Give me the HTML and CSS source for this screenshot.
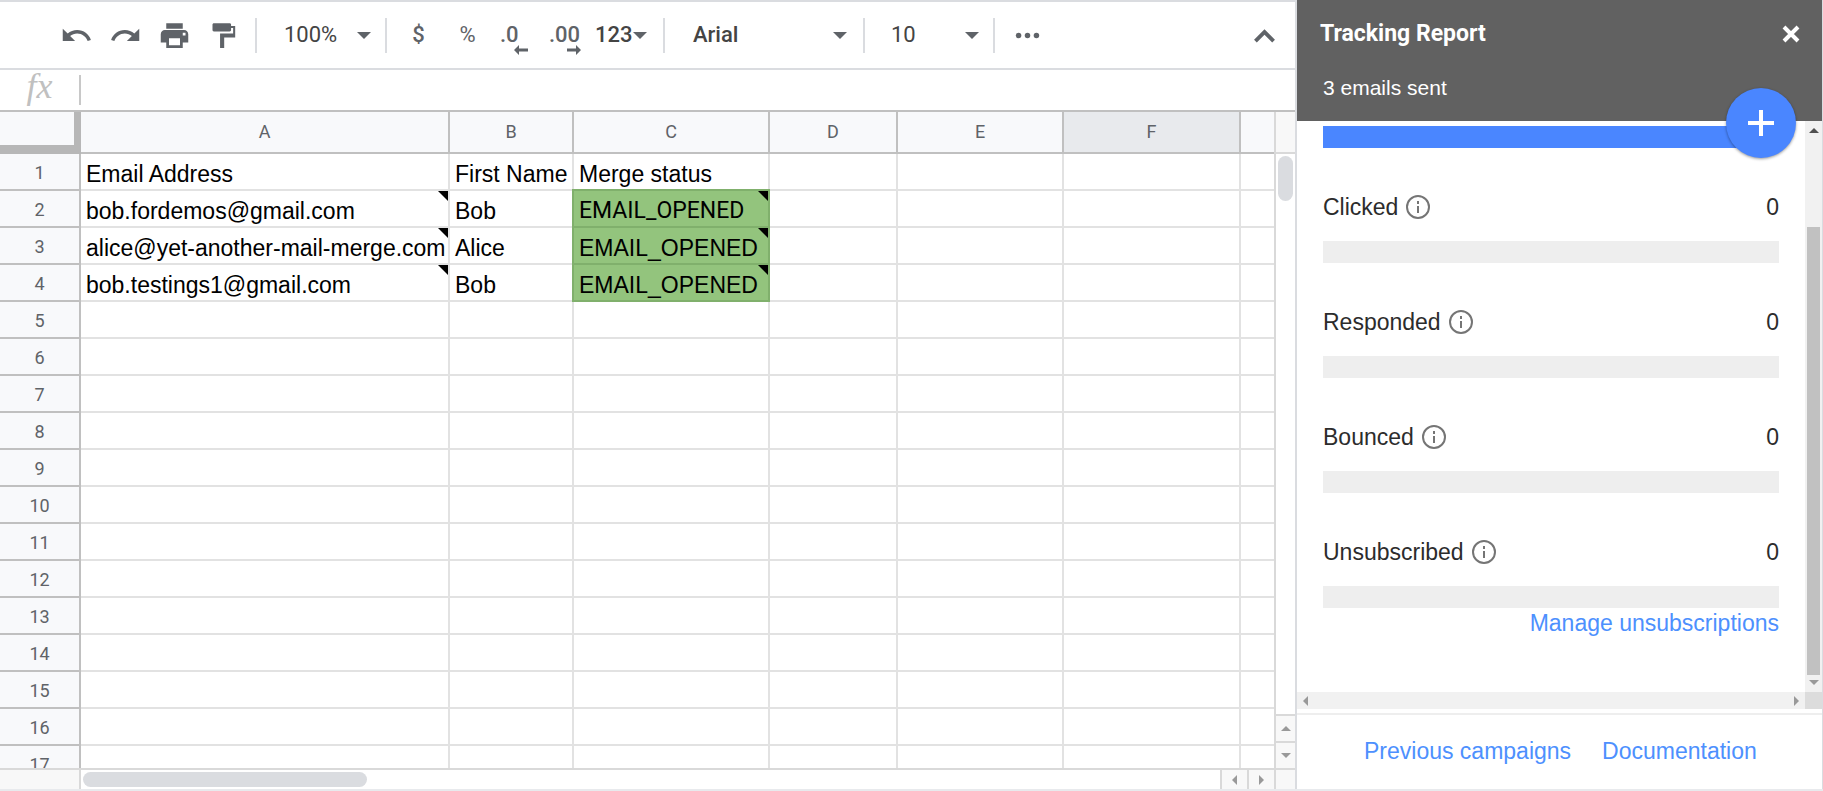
FILE: index.html
```
<!DOCTYPE html>
<html lang="en">
<head>
    <meta charset="UTF-8">
    <meta name="viewport" content="width=device-width, initial-scale=1.0">
    <title>Tracking Report</title>
    <link rel="stylesheet" href="styles.css">
</head>
<body>
    <!-- Spreadsheet -->
    <main class="sheet">
        <div class="toolbar">
            <button class="tool" aria-label="Undo">
                <svg class="icon" viewBox="0 0 24 24"><path d="M12.5 8c-2.65 0-5.05.99-6.9 2.6L2 7v9h9l-3.62-3.62c1.39-1.16 3.16-1.88 5.12-1.88 3.54 0 6.55 2.31 7.6 5.5l2.37-.78C21.08 11.03 17.15 8 12.5 8z"/></svg>
            </button>
            <button class="tool" aria-label="Redo">
                <svg class="icon" viewBox="0 0 24 24"><path d="M18.4 10.6C16.55 8.99 14.15 8 11.5 8c-4.65 0-8.58 3.03-9.96 7.22L3.9 16c1.05-3.19 4.05-5.5 7.6-5.5 1.95 0 3.73.72 5.12 1.88L13 16h9V7l-3.6 3.6z"/></svg>
            </button>
            <button class="tool" aria-label="Print">
                <svg class="icon" viewBox="0 0 24 24"><path d="M19 8H5c-1.66 0-3 1.34-3 3v6h4v4h12v-4h4v-6c0-1.66-1.34-3-3-3zm-3 11H8v-5h8v5zm4-7h-2v-2h2v2zm-2-9H6v4h12V3z"/></svg>
            </button>
            <button class="tool" aria-label="Paint format">
                <svg class="icon" viewBox="0 0 24 24"><path d="M17.500 5V4c0-.55-.45-1-1-1H5c-.55 0-1 .45-1 1v4c0 .55.45 1 1 1h11.500c.55 0 1-.45 1-1V6.500h1.500v4H9.500V21h3v-7.500H20.500V5z"/></svg>
            </button>
            <span class="divider first"></span>
            <button class="picker zoom-level">100%<span class="arrow"></span></button>
            <span class="divider"></span>
            <button class="tool currency" aria-label="Format as currency">$</button>
            <button class="tool percent" aria-label="Format as percent">%</button>
            <button class="tool decimal less" aria-label="Decrease decimal places">.0
                <svg class="decimal-arrow" viewBox="0 0 14 10"><path d="M0 5l5-5v3.500h9v3h-9v3.500z"/></svg>
            </button>
            <button class="tool decimal" aria-label="Increase decimal places">.00
                <svg class="decimal-arrow" viewBox="0 0 14 10"><path d="M14 5l-5-5v3.500h-9v3h9v3.500z"/></svg>
            </button>
            <button class="picker number-format">123<span class="arrow"></span></button>
            <span class="divider"></span>
            <button class="picker font-name">Arial<span class="arrow"></span></button>
            <span class="divider"></span>
            <button class="picker font-size">10<span class="arrow"></span></button>
            <span class="divider"></span>
            <button class="tool more" aria-label="More">
                <svg class="icon" viewBox="0 0 24 24"><circle cx="5.500" cy="12" r="2"/><circle cx="12" cy="12" r="2"/><circle cx="18.500" cy="12" r="2"/></svg>
            </button>
            <button class="tool collapse" aria-label="Hide the menus">
                <svg class="icon" viewBox="0 0 24 24"><path d="M12 7.500l-7.600 7.600L6.400 17l5.600-5.600 5.600 5.600 2-1.900z"/></svg>
            </button>
        </div>

        <div class="formula-bar">
            <label class="fx" for="formula">fx</label>
            <input class="formula" id="formula" type="text">
        </div>

        <div class="grid-area">
            <div class="grid">
                <table>
                    <colgroup>
                        <col class="col-num"><col class="col-a"><col class="col-b"><col class="col-c">
                        <col class="col-d"><col class="col-e"><col class="col-f"><col>
                    </colgroup>
                    <thead>
                        <tr><th class="corner"></th><th>A</th><th>B</th><th>C</th><th>D</th><th>E</th><th class="selected">F</th><th></th></tr>
                    </thead>
                    <tbody>
                        <tr><th>1</th><td>Email Address</td><td>First Name</td><td>Merge status</td><td></td><td></td><td></td><td></td></tr>
                        <tr><th>2</th><td class="note">bob.fordemos@gmail.com</td><td>Bob</td><td class="note opened retyped">EMAIL_OPENED</td><td></td><td></td><td></td><td></td></tr>
                        <tr><th>3</th><td class="note">alice@yet-another-mail-merge.com</td><td>Alice</td><td class="note opened">EMAIL_OPENED</td><td></td><td></td><td></td><td></td></tr>
                        <tr><th>4</th><td class="note">bob.testings1@gmail.com</td><td>Bob</td><td class="note opened">EMAIL_OPENED</td><td></td><td></td><td></td><td></td></tr>
                        <tr><th>5</th><td></td><td></td><td></td><td></td><td></td><td></td><td></td></tr>
                        <tr><th>6</th><td></td><td></td><td></td><td></td><td></td><td></td><td></td></tr>
                        <tr><th>7</th><td></td><td></td><td></td><td></td><td></td><td></td><td></td></tr>
                        <tr><th>8</th><td></td><td></td><td></td><td></td><td></td><td></td><td></td></tr>
                        <tr><th>9</th><td></td><td></td><td></td><td></td><td></td><td></td><td></td></tr>
                        <tr><th>10</th><td></td><td></td><td></td><td></td><td></td><td></td><td></td></tr>
                        <tr><th>11</th><td></td><td></td><td></td><td></td><td></td><td></td><td></td></tr>
                        <tr><th>12</th><td></td><td></td><td></td><td></td><td></td><td></td><td></td></tr>
                        <tr><th>13</th><td></td><td></td><td></td><td></td><td></td><td></td><td></td></tr>
                        <tr><th>14</th><td></td><td></td><td></td><td></td><td></td><td></td><td></td></tr>
                        <tr><th>15</th><td></td><td></td><td></td><td></td><td></td><td></td><td></td></tr>
                        <tr><th>16</th><td></td><td></td><td></td><td></td><td></td><td></td><td></td></tr>
                        <tr><th>17</th><td></td><td></td><td></td><td></td><td></td><td></td><td></td></tr>
                    </tbody>
                </table>
            </div>
            <div class="scroll-y">
                <span class="scroll-top"></span>
                <div class="track"><span class="thumb"></span></div>
                <button class="step" aria-label="Scroll up"><span class="tri up"></span></button>
                <button class="step" aria-label="Scroll down"><span class="tri down"></span></button>
            </div>
        </div>
        <div class="scroll-x">
            <span class="scroll-start"></span>
            <div class="track"><span class="thumb"></span></div>
            <button class="step" aria-label="Scroll left"><span class="tri left"></span></button>
            <button class="step" aria-label="Scroll right"><span class="tri right"></span></button>
            <span class="scroll-end"></span>
        </div>
    </main>

    <!-- Tracking report -->
    <aside class="sidebar">
        <header class="report-header">
            <div class="title-row">
                <h1>Tracking Report</h1>
                <button class="close" aria-label="Close">
                    <svg viewBox="0 0 18 18"><path d="M2 2l14 14M16 2L2 16"/></svg>
                </button>
            </div>
            <p class="sent">3 emails sent</p>
            <button class="add" aria-label="New campaign">
                <svg viewBox="0 0 26 26"><path d="M13 0v26M0 13h26"/></svg>
            </button>
        </header>

        <div class="report-body">
            <div class="stats">
                <div class="bar full"></div>
                <section class="stat">
                    <div class="stat-label">Clicked
                        <svg class="info" viewBox="0 0 24 24"><circle cx="12" cy="12" r="11"/><path d="M12 11v7M12 6v3"/></svg>
                        <span class="count">0</span>
                    </div>
                    <div class="bar"></div>
                </section>
                <section class="stat">
                    <div class="stat-label">Responded
                        <svg class="info" viewBox="0 0 24 24"><circle cx="12" cy="12" r="11"/><path d="M12 11v7M12 6v3"/></svg>
                        <span class="count">0</span>
                    </div>
                    <div class="bar"></div>
                </section>
                <section class="stat">
                    <div class="stat-label">Bounced
                        <svg class="info" viewBox="0 0 24 24"><circle cx="12" cy="12" r="11"/><path d="M12 11v7M12 6v3"/></svg>
                        <span class="count">0</span>
                    </div>
                    <div class="bar"></div>
                </section>
                <section class="stat">
                    <div class="stat-label">Unsubscribed
                        <svg class="info" viewBox="0 0 24 24"><circle cx="12" cy="12" r="11"/><path d="M12 11v7M12 6v3"/></svg>
                        <span class="count">0</span>
                    </div>
                    <div class="bar"></div>
                </section>
                <a class="manage" href="#">Manage unsubscriptions</a>
            </div>
            <div class="side-scroll-y">
                <span class="tri up dark"></span>
                <span class="side-thumb"></span>
                <span class="tri down"></span>
            </div>
            <div class="side-scroll-x">
                <span class="tri left"></span>
                <span class="tri right"></span>
            </div>
            <span class="side-corner"></span>
        </div>

        <footer class="report-footer">
            <a href="#">Previous campaigns</a>
            <a href="#">Documentation</a>
        </footer>
    </aside>
</body>
</html>
```
FILE: styles.css
```
* {
    box-sizing: border-box;
}

body {
    display: flex;
    height: 100vh;
    margin: 0;
    overflow: hidden;
    font-family: 'Liberation Sans', Arial, sans-serif;
    background: white;
    border-bottom: 2px solid #e8eaed;
}

button {
    display: flex;
    align-items: center;
    justify-content: center;
    padding: 0;
    border: none;
    background: none;
    color: inherit;
    font: inherit;
    cursor: pointer;
}

a {
    color: #4d90fe;
    text-decoration: none;
}

.sheet {
    flex: 1;
    min-width: 0;
    display: flex;
    flex-direction: column;
    border-right: 2px solid #dadce0;
}

/* Toolbar */
.toolbar {
    display: flex;
    align-items: center;
    height: 70px;
    padding-left: 52px;
    border-top: 2px solid #dadce0;
    border-bottom: 2px solid #dadce0;
    font: 500 22px/30px Roboto, sans-serif;
    color: #5f6368;
}

.tool {
    width: 49px;
    height: 36px;
}

.icon {
    width: 33px;
    height: 33px;
    fill: #5f6368;
}

.divider {
    width: 2px;
    height: 35px;
    background: #dadce0;
}

.first {
    margin-left: 7px;
}

.picker {
    justify-content: space-between;
    height: 36px;
    font-weight: 400;
    color: #444;
}

.arrow {
    border: 7px solid transparent;
    border-top-color: #5f6368;
    border-bottom: none;
}

.zoom-level {
    width: 128px;
    padding: 0 14px 0 27px;
}

.currency {
    margin-left: 7px;
}

.percent {
    font-weight: 400;
}

.decimal {
    position: relative;
    justify-content: flex-start;
    padding-left: 8px;
}

.decimal-arrow {
    position: absolute;
    right: 9px;
    bottom: -2px;
    width: 14px;
    height: 10px;
    fill: #5f6368;
}

.less .decimal-arrow {
    right: 13px;
}

.number-format {
    width: 73px;
    padding: 0 16px 0 5px;
    font-weight: 500;
}

.font-name {
    width: 198px;
    padding: 0 16px 0 28px;
    font-weight: 500;
}

.font-size {
    width: 128px;
    padding: 0 14px 0 26px;
}

.more {
    width: 64px;
}

.collapse {
    margin-left: auto;
    margin-right: 6px;
}

/* Formula bar */
.formula-bar {
    display: flex;
    align-items: center;
    height: 42px;
    border-bottom: 2px solid #c0c0c0;
}

.fx {
    width: 79px;
    padding-bottom: 8px;
    text-align: center;
    font: italic 36px/32px 'Liberation Serif', serif;
    color: #c0c0c0;
}

.formula {
    flex: 1;
    height: 30px;
    padding: 0 8px;
    border: none;
    border-left: 2px solid #c8c8c8;
    outline: none;
    font: inherit;
}

/* Grid */
.grid-area {
    flex: 1;
    min-height: 0;
    display: flex;
    border-bottom: 2px solid #d9d9d9;
}

.grid {
    flex: 1;
    min-width: 0;
    overflow: hidden;
}

table {
    width: 100%;
    table-layout: fixed;
    border-collapse: separate;
    border-spacing: 0;
}

.col-num { width: 81px; }
.col-a { width: 369px; }
.col-b { width: 124px; }
.col-c { width: 196px; }
.col-d { width: 128px; }
.col-e { width: 166px; }
.col-f { width: 177px; }

th {
    height: 37px;
    padding: 2px 0 0;
    border-right: 2px solid #c0c0c0;
    border-bottom: 2px solid #c0c0c0;
    background: #f8f9fb;
    font: 400 18px/20px Roboto, sans-serif;
    color: #5f6368;
}

thead th {
    height: 42px;
    padding: 0;
}

thead th:last-child,
td:last-child {
    border-right: none;
}

.corner {
    border-right: 7px solid #b7b7b7;
    border-bottom: 9px solid #b7b7b7;
}

thead .selected {
    background: #e8eaed;
}

td {
    position: relative;
    height: 37px;
    padding: 4px 0 0 5px;
    border-right: 2px solid #e2e2e2;
    border-bottom: 2px solid #e2e2e2;
    font-size: 23px;
    line-height: 30px;
    color: black;
    white-space: nowrap;
}

.opened {
    background: #93c47d;
    border-color: #80b06c;
    box-shadow: -2px 0 #80b06c, 0 -2px #80b06c, -2px -2px #80b06c;
}

.retyped {
    font-family: Roboto, sans-serif;
}

.note::after {
    content: '';
    position: absolute;
    top: 0;
    right: 0;
    border-top: 10px solid black;
    border-left: 10px solid transparent;
}

/* Sheet scrollbars */
.scroll-y {
    display: flex;
    flex-direction: column;
    width: 21px;
    border-left: 2px solid #d9d9d9;
}

.scroll-top {
    height: 42px;
    background: #f8f8f8;
    border-bottom: 2px solid #d9d9d9;
}

.track {
    flex: 1;
    padding: 2px;
}

.thumb {
    display: block;
    border-radius: 8px;
    background: #dadce0;
}

.scroll-y .thumb {
    height: 45px;
}

.scroll-y .step {
    height: 27px;
    border-top: 2px solid #d9d9d9;
    background: #f8f8f8;
}

.scroll-x {
    display: flex;
    height: 19px;
}

.scroll-start {
    width: 81px;
    background: #f8f8f8;
    border-right: 2px solid #d9d9d9;
}

.scroll-x .thumb {
    width: 25%;
    height: 15px;
}

.scroll-x .step {
    width: 27px;
    border-left: 2px solid #d9d9d9;
    background: #f8f8f8;
}

.scroll-end {
    width: 21px;
    background: #f8f8f8;
    border-left: 2px solid #d9d9d9;
}

.tri {
    border: 5px solid transparent;
}

.up { border-top: none; border-bottom-color: #999; }
.down { border-bottom: none; border-top-color: #999; }
.left { border-left: none; border-right-color: #999; }
.right { border-right: none; border-left-color: #999; }
.dark { border-bottom-color: #505050; }

/* Sidebar */
.sidebar {
    display: flex;
    flex-direction: column;
    width: 526px;
    border-right: 1px solid #dadce0;
}

.report-header {
    position: relative;
    height: 121px;
    padding: 19px 22px 0 23px;
    background: #616161;
    color: white;
}

.title-row {
    display: flex;
    align-items: center;
    justify-content: space-between;
}

h1 {
    margin: 0;
    font: 700 23px/30px Roboto, sans-serif;
}

.close {
    width: 18px;
    height: 30px;
}

.close svg {
    width: 18px;
    height: 18px;
    stroke: white;
    stroke-width: 4;
}

.sent {
    margin: 24px 0 0 3px;
    font-size: 21px;
    line-height: 30px;
}

.add {
    position: absolute;
    right: 26px;
    bottom: -37px;
    z-index: 1;
    width: 70px;
    height: 70px;
    border-radius: 50%;
    background: #4a86ff;
    box-shadow: 0 1px 3px rgba(0,0,0,0.4);
}

.add svg {
    width: 26px;
    height: 26px;
    stroke: white;
    stroke-width: 4;
}

.report-body {
    flex: 1;
    min-height: 0;
    display: grid;
    grid-template-columns: 1fr 17px;
    grid-template-rows: 1fr 17px;
}

.stats {
    padding: 5px 26px 0;
    overflow: hidden;
}

.bar {
    height: 22px;
    background: #eee;
}

.full {
    background: #4a86ff;
}

.stat {
    padding-top: 42px;
}

.stat-label {
    display: flex;
    align-items: center;
    gap: 8px;
    height: 32px;
    margin-bottom: 19px;
    padding-top: 1px;
    font-size: 23px;
    line-height: 30px;
    color: #2c2c2c;
}

.info {
    width: 24px;
    height: 24px;
    fill: none;
    stroke: #757575;
    stroke-width: 2;
}

.count {
    margin-left: auto;
}

.manage {
    display: block;
    text-align: right;
    font-size: 23px;
    line-height: 30px;
}

.side-scroll-y {
    display: flex;
    flex-direction: column;
    align-items: center;
    justify-content: space-between;
    padding: 7px 0;
    background: #f1f1f1;
}

.side-thumb {
    width: 13px;
    height: 448px;
    margin: auto 0 5px;
    background: #c1c1c1;
}

.side-scroll-x {
    display: flex;
    align-items: center;
    justify-content: space-between;
    padding: 0 6px;
    background: #f1f1f1;
}

.side-corner {
    background: #dcdcdc;
}

.report-footer {
    display: flex;
    gap: 31px;
    height: 76px;
    margin-top: 4px;
    padding: 21px 0 0 67px;
    border-top: 2px solid #eee;
    font-size: 23px;
    line-height: 30px;
}
```
